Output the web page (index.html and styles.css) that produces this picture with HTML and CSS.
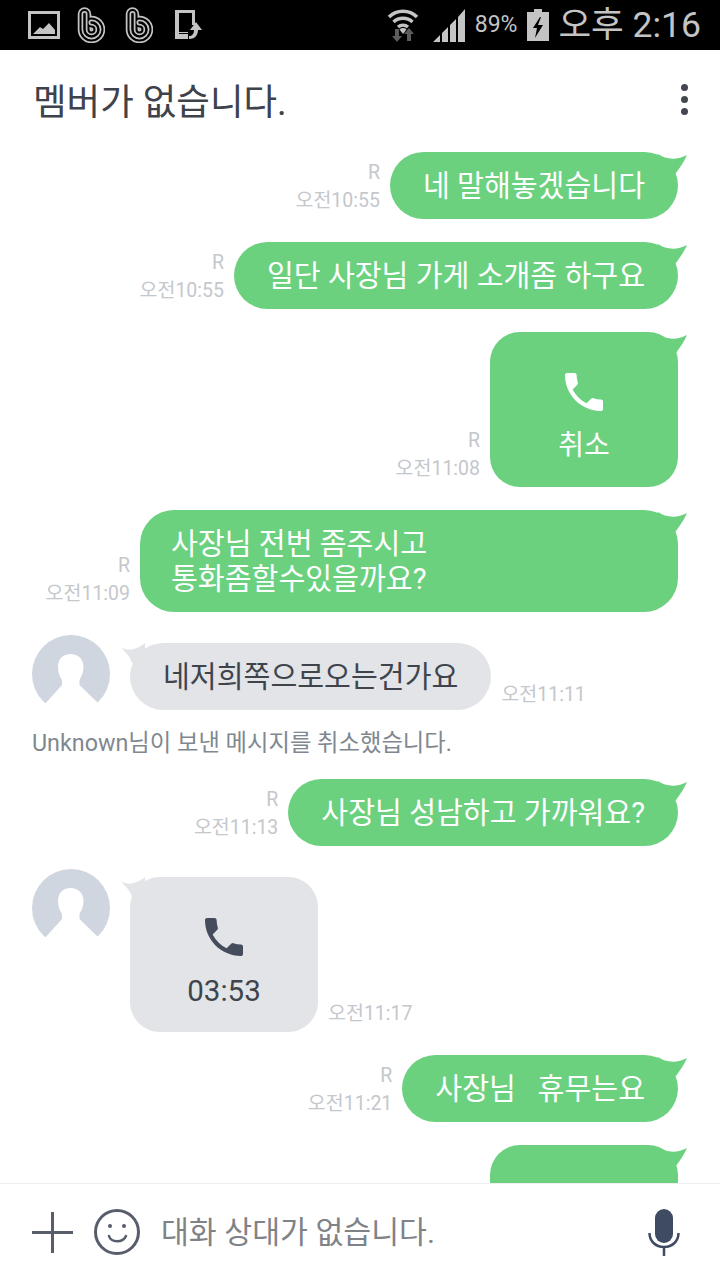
FILE: index.html
```html
<!DOCTYPE html>
<html lang="ko">
<head>
<meta charset="utf-8">
<title>멤버가 없습니다.</title>
<link rel="stylesheet" href="styles.css">
</head>
<body>
<svg class="defs" width="0" height="0">
	<symbol id="phone" viewBox="3 3 18 18">
		<path d="M6.62 10.79c1.44 2.83 3.76 5.14 6.59 6.59l2.2-2.2c.27-.27.67-.36 1.02-.24 1.12.37 2.33.57 3.57.57.55 0 1 .45 1 1V20c0 .55-.45 1-1 1-9.39 0-17-7.61-17-17 0-.55.45-1 1-1h3.5c.55 0 1 .45 1 1 0 1.25.2 2.45.57 3.57.11.35.03.74-.25 1.02l-2.2 2.2z"/>
	</symbol>
	<symbol id="tail-me" viewBox="0 0 34 24">
		<path d="M4 2C12 8 24 8 33 3 30 10 26 15 22 21H4z"/>
	</symbol>
	<symbol id="tail-them" viewBox="0 0 30 24">
		<path d="M0 4C6 8 14 8 24 0V20H11C9 13 4 9 0 4z"/>
	</symbol>
	<symbol id="avatar" viewBox="0 0 78 78">
		<circle cx="39" cy="39" r="39" fill="#cfd6df"/>
		<path fill="#fff" d="M38.500 19C46 19 51.500 24 51.500 32 51.500 38 49 42 47.500 45V50L66 68V80H12V70L30 50V45C28 42 26 38 26 32 26 24 31 19 38.500 19z"/>
	</symbol>
	<symbol id="brand" viewBox="0 0 28 36">
		<g fill="none" stroke-linecap="round">
			<path stroke="#c4c4c4" stroke-width="13.500" d="M7.500 7V22.500a7 7 0 1 0 7-7"/>
			<path stroke="#000" stroke-width="10" d="M7.500 7V22.500a7 7 0 1 0 7-7"/>
			<path stroke="#c4c4c4" stroke-width="6" d="M7.500 7V22.500a7 7 0 1 0 7-7"/>
			<path stroke="#000" stroke-width="2.500" d="M7.500 7V22.500a7 7 0 1 0 7-7"/>
		</g>
	</symbol>
</svg>

<div class="page">
	<div class="status">
		<div class="status-left">
			<svg class="ic-image" width="32" height="28" viewBox="0 0 32 28">
				<rect x="1.500" y="1.500" width="29" height="25" fill="none" stroke="#c4c4c4" stroke-width="3"/>
				<path fill="#c4c4c4" d="M5 23l7-7 3 2 6-6 6 7v4z"/>
			</svg>
			<svg class="ic-b"><use href="#brand"/></svg>
			<svg class="ic-b"><use href="#brand"/></svg>
			<svg class="ic-rotate" width="28" height="30" viewBox="0 0 28 30">
				<path fill="#c4c4c4" d="M0 0h20v15h-3V3H4v19h9v7H0z"/>
				<path fill="#000" d="M4 23h9v1H4z"/>
				<path fill="#c4c4c4" d="M21 12l6 8h-4c0 4-2 9-9 9v-3c3 0 5-2 5-6h-4z"/>
			</svg>
		</div>
		<div class="status-right">
			<svg class="ic-wifi" width="32" height="34" viewBox="0 0 32 34">
				<path fill="none" stroke="#c4c4c4" stroke-width="3.500" d="M2 9a20 20 0 0 1 28 0M6.500 14a14 14 0 0 1 19 0M11 19a8 8 0 0 1 10 0"/>
				<path fill="#c4c4c4" d="M16 26l-3.500-4.500a5 5 0 0 1 7 0z"/>
				<path fill="#5c5c5c" d="M10 34l-5-6h3v-7h4v7h3zM22 20l5 6h-3v7h-4v-7h-3z"/>
			</svg>
			<svg class="ic-signal" width="32" height="33" viewBox="0 0 32 33">
				<path fill="#c4c4c4" d="M0 33l7-7v7zM9 24l6-6v15H9zM17 16l6-6v23h-6zM25 8l7-8v33h-7z"/>
			</svg>
			<span class="batt-text">89%</span>
			<svg class="ic-batt" width="22" height="32" viewBox="0 0 22 32">
				<path fill="#c4c4c4" fill-rule="evenodd" d="M7 0h8v3h7v29H0V3h7zM13 8L6 19h4l-2 10 8-13h-5l3-8z"/>
			</svg>
			<span class="clock">오후 2:16</span>
		</div>
	</div>

	<div class="header">
		<h1 class="title">멤버가 없습니다.</h1>
		<div class="dots"><i></i><i></i><i></i></div>
	</div>

	<div class="chat">
		<div class="row me">
			<div class="meta"><span>R</span><span>오전10:55</span></div>
			<div class="bubble">네 말해놓겠습니다<svg class="tail"><use href="#tail-me"/></svg></div>
		</div>
		<div class="row me">
			<div class="meta"><span>R</span><span>오전10:55</span></div>
			<div class="bubble">일단 사장님 가게 소개좀 하구요<svg class="tail"><use href="#tail-me"/></svg></div>
		</div>
		<div class="row me">
			<div class="meta"><span>R</span><span>오전11:08</span></div>
			<div class="bubble call">
				<svg class="call-icon"><use href="#phone"/></svg>
				<div class="call-label">취소</div>
				<svg class="tail"><use href="#tail-me"/></svg>
			</div>
		</div>
		<div class="row me">
			<div class="meta"><span>R</span><span>오전11:09</span></div>
			<div class="bubble wide">사장님 전번 좀주시고<br>통화좀할수있을까요?<svg class="tail"><use href="#tail-me"/></svg></div>
		</div>
		<div class="row them">
			<svg class="avatar"><use href="#avatar"/></svg>
			<div class="bubble">네저희쪽으로오는건가요<svg class="tail"><use href="#tail-them"/></svg></div>
			<div class="meta"><span>오전11:11</span></div>
		</div>
		<div class="system">Unknown님이 보낸 메시지를 취소했습니다.</div>
		<div class="row me">
			<div class="meta"><span>R</span><span>오전11:13</span></div>
			<div class="bubble">사장님 성남하고 가까워요?<svg class="tail"><use href="#tail-me"/></svg></div>
		</div>
		<div class="row them">
			<svg class="avatar"><use href="#avatar"/></svg>
			<div class="bubble call">
				<svg class="call-icon"><use href="#phone"/></svg>
				<div class="call-label">03:53</div>
				<svg class="tail"><use href="#tail-them"/></svg>
			</div>
			<div class="meta"><span>오전11:17</span></div>
		</div>
		<div class="row me">
			<div class="meta"><span>R</span><span>오전11:21</span></div>
			<div class="bubble">사장님&nbsp;&nbsp;&nbsp;휴무는요<svg class="tail"><use href="#tail-me"/></svg></div>
		</div>
		<div class="row me">
			<div class="bubble call"><svg class="tail"><use href="#tail-me"/></svg></div>
		</div>
	</div>

	<div class="input">
		<svg class="ic-plus" width="41" height="41" viewBox="0 0 41 41">
			<path fill="none" stroke="#575d6b" stroke-width="3" d="M20.500 0v41M0 20.500h41"/>
		</svg>
		<svg class="ic-smile" width="46" height="46" viewBox="0 0 46 46">
			<circle cx="23" cy="23" r="21.500" fill="none" stroke="#575d6b" stroke-width="3"/>
			<circle cx="16" cy="17" r="2" fill="#575d6b"/>
			<circle cx="30" cy="17" r="2" fill="#575d6b"/>
			<path fill="none" stroke="#575d6b" stroke-width="2.500" stroke-linecap="round" d="M15 27c2 7 14 7 17 0"/>
		</svg>
		<div class="placeholder">대화 상대가 없습니다.</div>
		<svg class="ic-mic" width="32" height="47" viewBox="0 0 32 47">
			<rect x="7" y="0" width="18" height="34" rx="9" fill="#3f4a63"/>
			<path fill="none" stroke="#3f4a63" stroke-width="2.500" d="M1.500 24c0 8 6 14 14.500 14s14.500-6 14.500-14M16 38v9"/>
		</svg>
	</div>
</div>
</body>
</html>
```

FILE: styles.css
```css
* {
	box-sizing: border-box;
}
html, body {
	margin: 0;
	padding: 0;
}
body {
	background: #fff;
	font-family: Roboto, "Noto Sans CJK KR", sans-serif;
}
.defs {
	display: block;
	height: 0;
}
.page {
	width: 720px;
	height: 1280px;
	display: flex;
	flex-direction: column;
	overflow: hidden;
}

/* status bar */
.status {
	height: 50px;
	flex: none;
	background: #000;
	color: #c4c4c4;
	display: flex;
	justify-content: space-between;
	align-items: center;
	padding: 0 19px 0 28px;
}
.status-left, .status-right {
	display: flex;
	align-items: center;
}
.ic-b {
	width: 28px;
	height: 36px;
	margin-left: 20px;
}
.ic-b:nth-child(2) {
	margin-left: 17px;
}
.ic-rotate {
	margin-left: 22px;
}
.ic-signal {
	margin-left: 14px;
}
.batt-text {
	font-size: 23px;
	line-height: 50px;
	margin-left: 10px;
}
.ic-batt {
	margin-left: 10px;
}
.clock {
	font-size: 35.500px;
	line-height: 50px;
	margin-left: 9px;
}

/* header */
.header {
	height: 98px;
	flex: none;
	display: flex;
	justify-content: space-between;
	align-items: center;
	padding: 0 32px 0 33px;
}
.title {
	margin: 0;
	font-size: 36.500px;
	font-weight: 400;
	color: #3e424a;
}
.dots {
	display: flex;
	flex-direction: column;
	gap: 5px;
}
.dots i {
	display: block;
	width: 7px;
	height: 7px;
	border-radius: 50%;
	background: #43474f;
}

/* messages */
.chat {
	flex: 1;
	min-height: 0;
	overflow: hidden;
	padding-top: 4px;
}
.row {
	display: flex;
	align-items: flex-end;
	margin-bottom: 23px;
}
.row.me {
	justify-content: flex-end;
	padding-right: 42px;
}
.row.them {
	padding-left: 32px;
	align-items: flex-start;
}
.meta {
	display: flex;
	flex-direction: column;
	align-items: flex-end;
	margin: 0 10px 4px 0;
	font-size: 19.500px;
	line-height: 28px;
	color: #c4c7cc;
}
.bubble {
	position: relative;
	padding: 17px 33px 15px;
	border-radius: 34px;
	background: #6bd17f;
	color: #fff;
	font-size: 29.200px;
	line-height: 35px;
	white-space: nowrap;
}
.bubble.wide {
	width: 538px;
	padding-left: 31px;
}
.bubble.call {
	width: 188px;
	height: 155px;
	padding: 41px 0 0;
	border-radius: 30px;
	text-align: center;
}
.call-icon {
	display: block;
	width: 38px;
	height: 38px;
	margin: 0 auto;
	fill: #fff;
}
.call-label {
	margin-top: 17px;
	font-size: 28px;
}
.tail {
	position: absolute;
	top: 0;
	right: -10px;
	width: 34px;
	height: 24px;
	fill: #6bd17f;
}
.them .bubble {
	margin: 8px 0 0 20px;
	background: #e2e4e8;
	color: #3f444c;
}
.them .tail {
	right: auto;
	left: -9px;
	width: 30px;
	fill: #e2e4e8;
}
.them .call-icon {
	fill: #454c5b;
}
.them .call-label {
	margin-top: 18px;
	font-size: 29.500px;
}
.them .meta {
	align-self: flex-end;
	margin: 0 0 4px 10px;
}
.avatar {
	flex: none;
	width: 78px;
	height: 78px;
}
.system {
	margin: -8px 0 21px 32px;
	font-size: 23.300px;
	line-height: 30px;
	color: #7f8890;
}

/* input bar */
.input {
	height: 97px;
	flex: none;
	display: flex;
	align-items: center;
	border-top: 1px solid #eceef0;
	padding: 0 40px 0 32px;
}
.ic-smile {
	margin-left: 21px;
}
.placeholder {
	flex: 1;
	margin: 0 0 5px 21px;
	font-size: 30.300px;
	color: #7f8388;
}
```
